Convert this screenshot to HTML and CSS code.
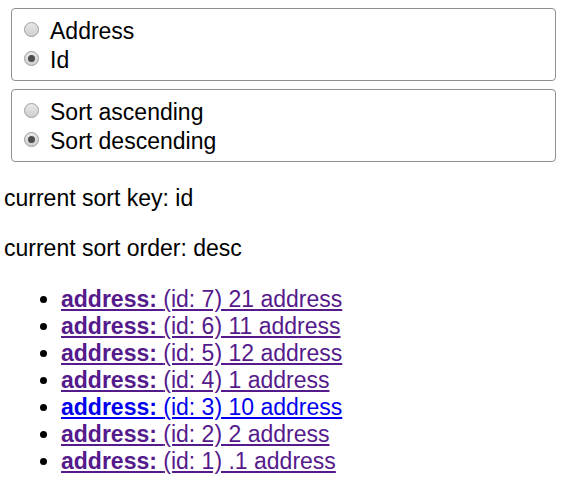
FILE: index.html
```html
<!DOCTYPE html>
<html>
<head>
<meta charset="utf-8">
<link rel="stylesheet" href="styles.css">
</head>
<body>
<fieldset class="group">
  <label class="opt"><span class="radio"></span><span class="txt">Address</span></label>
  <label class="opt"><span class="radio checked"></span><span class="txt">Id</span></label>
</fieldset>
<fieldset class="group">
  <label class="opt"><span class="radio"></span><span class="txt">Sort ascending</span></label>
  <label class="opt"><span class="radio checked"></span><span class="txt">Sort descending</span></label>
</fieldset>
<p class="info">current sort key: id</p>
<p class="info">current sort order: desc</p>
<ul class="list">
  <li><a href="#" class="link visited"><b>address: </b>(id: 7) 21 address</a></li>
  <li><a href="#" class="link visited"><b>address: </b>(id: 6) 11 address</a></li>
  <li><a href="#" class="link visited"><b>address: </b>(id: 5) 12 address</a></li>
  <li><a href="#" class="link visited"><b>address: </b>(id: 4) 1 address</a></li>
  <li><a href="#" class="link fresh"><b>address: </b>(id: 3) 10 address</a></li>
  <li><a href="#" class="link visited"><b>address: </b>(id: 2) 2 address</a></li>
  <li><a href="#" class="link visited"><b>address: </b>(id: 1) .1 address</a></li>
</ul>
</body>
</html>
```
FILE: styles.css
```css
html, body {
  background: #fff;
}
body {
  margin: 8px 4px;
  font-family: "Liberation Sans", Arial, sans-serif;
  font-size: 23px;
  color: #000;
}
.group {
  margin: 0 7px 8px;
  padding: 6px 12px 7px 12px;
  border: 1px solid #8f8f8f;
  border-radius: 4px;
  min-width: 0;
}
.opt {
  display: flex;
  align-items: flex-start;
  height: 29px;
}
.txt {
  line-height: 29px;
  padding-top: 2px;
}
.radio {
  display: block;
  width: 15px;
  height: 15px;
  margin: 7px 11px 0 0;
  border: 1px solid #9c9c9c;
  border-radius: 50%;
  background: linear-gradient(#e8e8e8, #cfcfcf);
  box-sizing: border-box;
  position: relative;
  flex: none;
}
.radio.checked::after {
  content: "";
  position: absolute;
  left: 3px;
  top: 3px;
  width: 7px;
  height: 7px;
  border-radius: 50%;
  background: #4d4d4d;
}
.info {
  margin: 23px 0;
  line-height: 27px;
}
.list {
  margin: 24px 0 0;
  padding-left: 57px;
}
.list li {
  line-height: 27px;
}
.link {
  text-decoration: underline;
}
.visited {
  color: #551a8b;
}
.fresh {
  color: #0000ee;
}
```
